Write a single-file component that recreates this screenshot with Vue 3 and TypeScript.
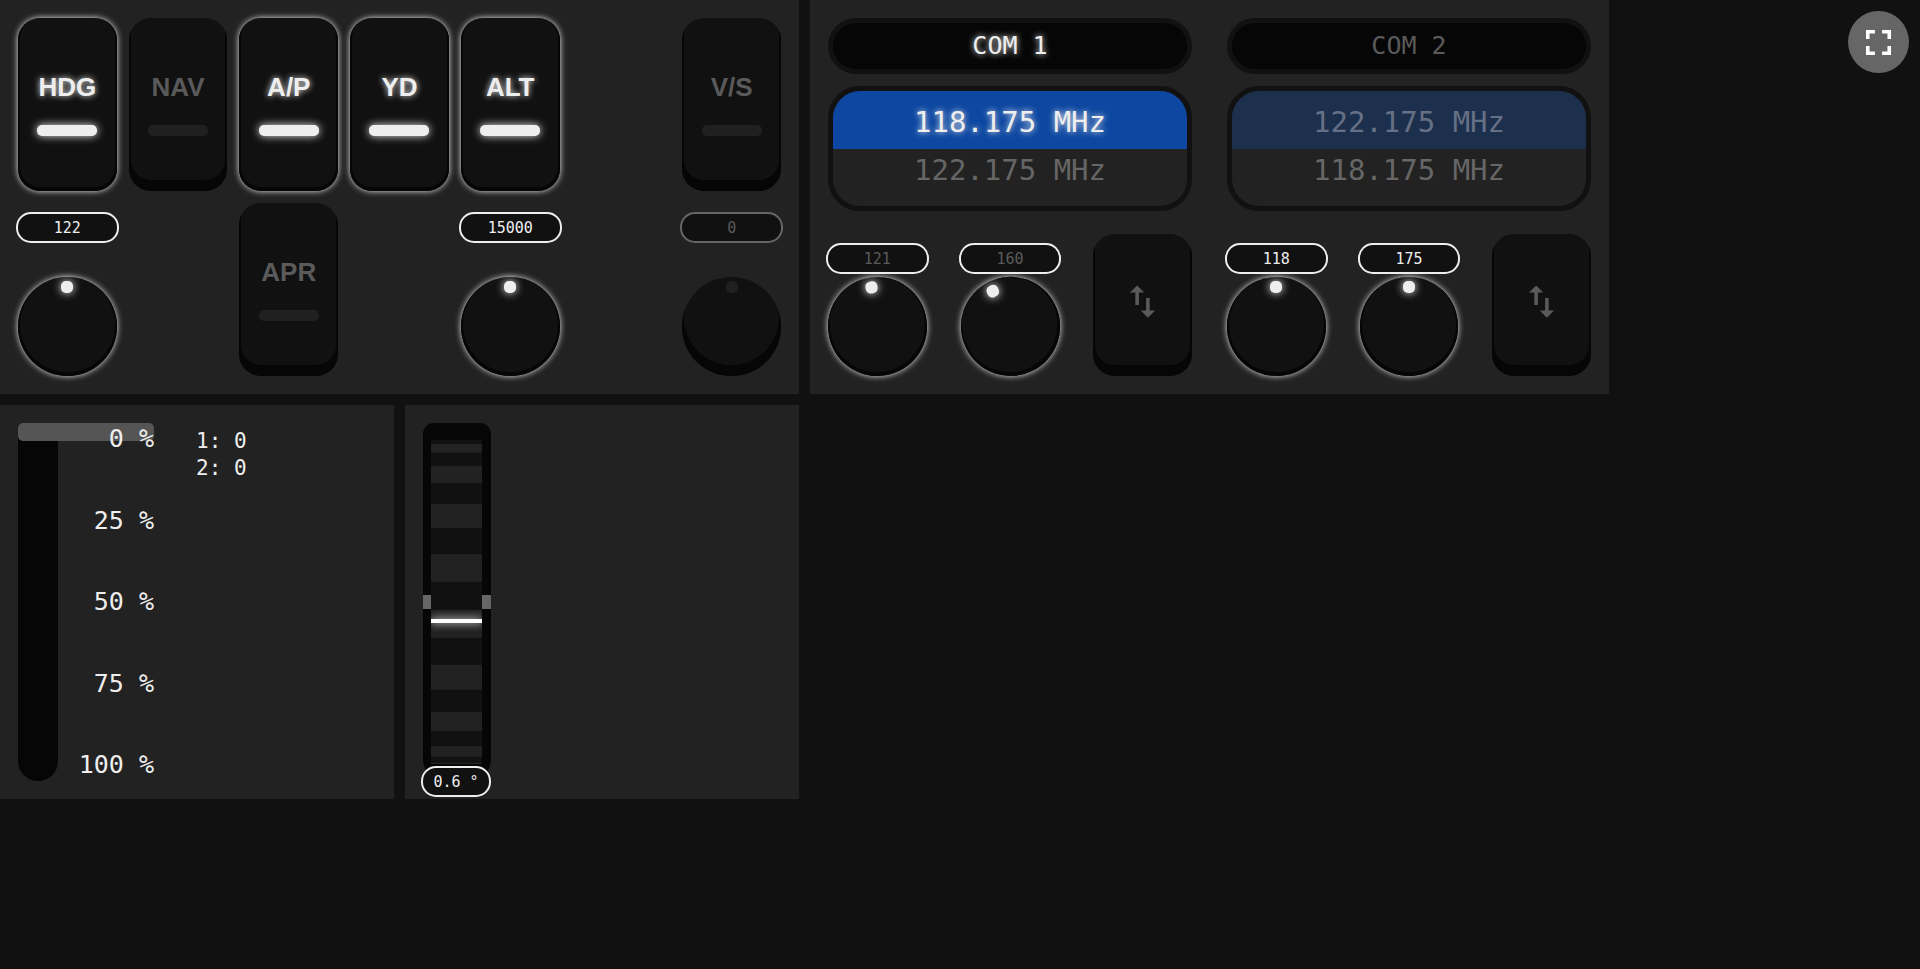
<script setup lang="ts">
import { computed, reactive, ref } from 'vue'

interface Mode { label: string; area: string; on: boolean }
interface Dial { name: string; area: string; value: string; on: boolean }
interface RadioDial { name: string; value: string; lit: boolean; angle: number }
interface Radio { name: string; on: boolean; active: string; standby: string; dials: RadioDial[] }

const modes = reactive<Mode[]>([
  { label: 'HDG', area: 'hdg', on: true },
  { label: 'NAV', area: 'nav', on: false },
  { label: 'A/P', area: 'ap', on: true },
  { label: 'YD', area: 'yd', on: true },
  { label: 'ALT', area: 'alt', on: true },
  { label: 'V/S', area: 'vs', on: false },
  { label: 'APR', area: 'apr', on: false },
])

const dials: Dial[] = [
  { name: 'Heading', area: 'hdg-dial', value: '122', on: true },
  { name: 'Altitude', area: 'alt-dial', value: '15000', on: true },
  { name: 'Vertical speed', area: 'vs-dial', value: '0', on: false },
]

const radios = reactive<Radio[]>([
  {
    name: 'COM 1', on: true, active: '118.175', standby: '122.175',
    dials: [
      { name: 'MHz', value: '121', lit: false, angle: -8 },
      { name: 'kHz', value: '160', lit: false, angle: -26 },
    ],
  },
  {
    name: 'COM 2', on: false, active: '122.175', standby: '118.175',
    dials: [
      { name: 'MHz', value: '118', lit: true, angle: 0 },
      { name: 'kHz', value: '175', lit: true, angle: 0 },
    ],
  },
])

function swap(radio: Radio) {
  const previous = radio.active
  radio.active = radio.standby
  radio.standby = previous
}

const throttle = ref(0)
const throttleMarks = [0, 25, 50, 75, 100]

/* Ridges of the trim wheel, projected from a cylinder seen side-on. */
const trim = ref(0.6)
const wheelRadius = 162
const project = (deg: number) => wheelRadius + wheelRadius * Math.sin((deg * Math.PI) / 180)
const ridges = computed(() => {
  const offset = 2.2 + trim.value
  const list: { y: number; height: number }[] = []
  for (let k = -5; k <= 4; k++) {
    const from = Math.max(-90, offset + k * 20)
    const to = Math.min(90, offset + k * 20 + 10)
    if (to > from) list.push({ y: project(from), height: project(to) - project(from) })
  }
  return list
})
const markerY = computed(() => Math.round(project(6.3 + trim.value)) - 2)

function toggleFullscreen() {
  if (document.fullscreenElement) document.exitFullscreen()
  else document.documentElement.requestFullscreen()
}
</script>

<template>
  <main class="deck">
    <section class="panel autopilot" aria-label="Autopilot">
      <button
        v-for="mode in modes"
        :key="mode.label"
        type="button"
        class="key"
        :class="[mode.area, { on: mode.on }]"
        :aria-pressed="mode.on"
        @click="mode.on = !mode.on"
      >
        <span class="key-label">{{ mode.label }}</span>
        <span class="lamp"></span>
      </button>
      <div v-for="dial in dials" :key="dial.name" class="dial" :class="[dial.area, { on: dial.on }]">
        <output class="pill" :class="{ dim: !dial.on, muted: !dial.on }">{{ dial.value }}</output>
        <div class="knob">
          <input type="range" :aria-label="dial.name" />
          <span class="dot"></span>
        </div>
      </div>
    </section>

    <section class="panel radios" aria-label="Radios">
      <div v-for="radio in radios" :key="radio.name" class="radio" :class="{ on: radio.on }">
        <h2 class="radio-name">{{ radio.name }}</h2>
        <div class="freqs">
          <div class="freq active">{{ radio.active }} MHz</div>
          <div class="freq">{{ radio.standby }} MHz</div>
        </div>
        <div class="tuning">
          <div v-for="dial in radio.dials" :key="dial.name" class="dial on">
            <output class="pill" :class="{ muted: !dial.lit }">{{ dial.value }}</output>
            <div class="knob" :style="{ transform: `rotate(${dial.angle}deg)` }">
              <input type="range" :aria-label="`${radio.name} ${dial.name}`" />
              <span class="dot"></span>
            </div>
          </div>
          <button type="button" class="key swap" :aria-label="`Swap ${radio.name} frequencies`" @click="swap(radio)">
            <svg viewBox="0 0 24 24" aria-hidden="true">
              <path d="M16 17.01V10h-2v7.01h-3L15 21l4-3.99h-3zM9 3 5 6.99h3V14h2V6.99h3L9 3z" />
            </svg>
          </button>
        </div>
      </div>
    </section>

    <section class="panel engine" aria-label="Throttle">
      <div class="throttle">
        <span class="slot"></span>
        <input v-model.number="throttle" type="range" min="0" max="100" aria-label="Throttle" />
        <div class="marks">
          <span v-for="mark in throttleMarks" :key="mark">{{ mark }} %</span>
        </div>
      </div>
      <div class="engines">
        <div>1: {{ throttle }}</div>
        <div>2: {{ throttle }}</div>
      </div>
    </section>

    <section class="panel" aria-label="Elevator trim">
      <div class="trim">
        <div class="wheel">
          <svg class="ridges" viewBox="0 0 51 324" preserveAspectRatio="none" aria-hidden="true">
            <rect v-for="(ridge, i) in ridges" :key="i" x="0" :y="ridge.y" width="51" :height="ridge.height" />
          </svg>
          <span class="marker" :style="{ top: `${markerY}px` }"></span>
        </div>
        <span class="notch"></span>
        <span class="notch right"></span>
        <input v-model.number="trim" type="range" min="-10" max="10" step="0.1" aria-label="Elevator trim" />
        <output class="pill">{{ trim }} °</output>
      </div>
    </section>

    <button type="button" class="fullscreen" aria-label="Fullscreen" @click="toggleFullscreen">
      <svg viewBox="0 0 24 24" aria-hidden="true">
        <path d="M7 14H5v5h5v-2H7v-3zm-2-4h2V7h3V5H5v5zm12 7h-3v2h5v-5h-2v3zM14 5v2h3v3h2V5h-5z" />
      </svg>
    </button>
  </main>
</template>

<style>
html {
  background: #111;
}
</style>

<style scoped>
* {
  box-sizing: border-box;
}

.deck {
  display: grid;
  grid-template-columns: repeat(4, minmax(0, 394px));
  gap: 11px;
  color: #eee;
  font-family: 'DejaVu Sans Mono', monospace;
}

.panel {
  min-height: 394px;
  padding: 18px;
  background: #222;
}

.autopilot {
  grid-column: span 2;
  display: grid;
  grid-template-columns: repeat(7, minmax(0, 1fr));
  grid-template-rows: repeat(2, 1fr);
  grid-template-areas:
    'hdg nav ap yd alt . vs'
    'hdg-dial . apr . alt-dial . vs-dial';
  gap: 12px;
}

.hdg { grid-area: hdg; }
.nav { grid-area: nav; }
.ap { grid-area: ap; }
.yd { grid-area: yd; }
.alt { grid-area: alt; }
.vs { grid-area: vs; }
.apr { grid-area: apr; }
.hdg-dial { grid-area: hdg-dial; }
.alt-dial { grid-area: alt-dial; }
.vs-dial { grid-area: vs-dial; }

.key {
  display: flex;
  flex-direction: column;
  align-items: center;
  justify-content: center;
  gap: 23px;
  padding: 0 0 2px;
  border: 0;
  border-radius: 22px;
  background: #111;
  color: #5a5a5a;
  box-shadow: inset 0 -9px 0 2px #060606;
  cursor: pointer;
}

.key.on {
  color: #eee;
  box-shadow: inset 0 -2px 0 2px #060606, 0 0 6px #eee;
}

.key-label {
  font: bold 26px/30px 'Liberation Sans', Arial, sans-serif;
}

.on .key-label {
  text-shadow: 0 0 6px #eee;
}

.lamp {
  width: 60px;
  height: 11px;
  border-radius: 5px;
  background: #202020;
}

.on .lamp {
  background: #eee;
  box-shadow: 0 0 9px #eee;
}

.dial {
  display: flex;
  flex-direction: column;
  justify-content: space-between;
  padding-top: 9px;
}

.pill {
  display: block;
  height: 31px;
  margin: 0 -2px;
  border: 2px solid #eee;
  border-radius: 15px;
  background: #111;
  color: #eee;
  font-size: 15px;
  line-height: 28px;
  text-align: center;
  white-space: nowrap;
}

.pill.dim {
  border-color: #666;
}

.pill.muted {
  color: #5a5a5a;
}

.knob {
  position: relative;
  aspect-ratio: 1;
}

.knob input {
  display: block;
  width: 100%;
  height: 100%;
  margin: 0;
  appearance: none;
  border-radius: 50%;
  background: #111;
  box-shadow: inset 0 -9px 0 2px #060606;
  cursor: pointer;
}

.on .knob input {
  box-shadow: inset 0 -2px 0 2px #060606, 0 0 6px #eee;
}

.knob input::-webkit-slider-thumb {
  appearance: none;
  width: 0;
  height: 0;
}

.dot {
  position: absolute;
  top: 4px;
  left: calc(50% - 6px);
  width: 12px;
  height: 12px;
  border-radius: 5px;
  background: #202020;
  pointer-events: none;
}

.on .dot {
  background: #eee;
  box-shadow: 0 0 9px #eee;
}

.radios {
  grid-column: span 2;
  display: grid;
  grid-template-columns: repeat(2, minmax(0, 1fr));
  gap: 35px;
}

.radio {
  display: flex;
  flex-direction: column;
}

.radio-name {
  height: 56px;
  margin: 0 0 12px;
  border: 5px solid #111;
  border-radius: 28px;
  background: #060606;
  color: #5a5a5a;
  font-size: 25px;
  font-weight: 400;
  line-height: 46px;
  text-align: center;
}

.freqs {
  height: 125px;
  margin-bottom: 23px;
  overflow: hidden;
  border: 5px solid #111;
  border-radius: 32px;
  color: #666;
  font-size: 29px;
  line-height: 42px;
  text-align: center;
}

.freq.active {
  height: 58px;
  background: #1c2f4d;
  color: #667085;
  line-height: 62px;
}

.on .radio-name,
.on .freq.active {
  color: #eee;
  text-shadow: 0 0 6px #eee;
}

.on .freq.active {
  background: #0d47a1;
}

.tuning {
  flex: 1;
  display: grid;
  grid-template-columns: repeat(3, minmax(0, 1fr));
  gap: 34px;
}

.swap {
  padding-bottom: 8px;
}

.swap svg,
.fullscreen svg {
  width: 43px;
  height: 43px;
  fill: currentColor;
}

.engine {
  display: flex;
  gap: 42px;
}

.throttle {
  position: relative;
  display: flex;
  width: 136px;
}

.slot {
  width: 40px;
  border-radius: 5px 5px 20px 20px;
  background: #060606;
}

.throttle input {
  position: absolute;
  inset: 0;
  width: 100%;
  height: 100%;
  margin: 0;
  appearance: none;
  background: transparent;
  writing-mode: vertical-lr;
  cursor: pointer;
}

.throttle input::-webkit-slider-thumb {
  appearance: none;
  width: 136px;
  height: 18px;
  border-radius: 5px;
  background: #555;
}

.marks {
  position: relative;
  flex: 1;
  display: flex;
  flex-direction: column;
  justify-content: space-between;
  font-size: 25px;
  line-height: 32px;
  text-align: right;
  pointer-events: none;
}

.engines {
  padding-top: 5px;
  font-size: 21px;
  line-height: 27px;
}

.trim {
  position: relative;
  display: flex;
  flex-direction: column;
  width: 68px;
  height: 358px;
  padding: 17px 9px 17px 8px;
  border-radius: 11px 11px 22px 22px;
  background: #060606;
}

.wheel {
  position: relative;
  flex: 1;
  overflow: hidden;
  background: #111;
}

.ridges {
  display: block;
  width: 100%;
  height: 100%;
  fill: #222;
}

.marker {
  position: absolute;
  left: 0;
  right: 0;
  height: 4px;
  background: #fff;
  box-shadow: 0 0 9px #fff;
}

.notch {
  position: absolute;
  top: 172px;
  left: 0;
  width: 8px;
  height: 14px;
  background: #666;
}

.notch.right {
  left: auto;
  right: 0;
  width: 9px;
}

.trim input {
  position: absolute;
  inset: 0;
  width: 100%;
  height: 100%;
  margin: 0;
  appearance: none;
  background: transparent;
  writing-mode: vertical-lr;
  cursor: pointer;
}

.trim input::-webkit-slider-thumb {
  appearance: none;
  width: 68px;
  height: 20px;
  background: transparent;
}

.trim .pill {
  position: absolute;
  top: 343px;
  left: 0;
  right: 0;
  margin-right: 0;
}

.fullscreen {
  position: fixed;
  top: 11px;
  right: 11px;
  display: grid;
  place-items: center;
  width: 61px;
  height: 62px;
  padding: 0;
  border: 0;
  border-radius: 50%;
  background: #666;
  color: #fff;
  cursor: pointer;
}
</style>
